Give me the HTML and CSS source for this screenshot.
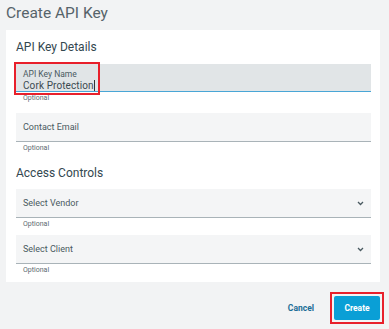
FILE: index.html
```html
<!DOCTYPE html>
<html lang="en">
<head>
    <meta charset="UTF-8">
    <title>Create API Key</title>
    <link rel="stylesheet" href="styles.css">
</head>
<body>
    <div class="page">
        <h1 class="title">Create API Key</h1>
        <div class="card">
            <h2 class="section">API Key Details</h2>
            <div class="field focused">
                <div class="mark">
                    <div class="label">API Key Name</div>
                    <div class="value">Cork Protection<span class="caret"></span></div>
                </div>
            </div>
            <div class="hint first">Optional</div>
            <div class="field">
                <div class="placeholder">Contact Email</div>
            </div>
            <div class="hint">Optional</div>
            <h2 class="section second">Access Controls</h2>
            <div class="field select">
                <div class="placeholder">Select Vendor</div>
                <svg class="chevron" width="7" height="5" viewBox="0 0 7 5"><path d="M1 1l2.5 2.5L6 1" fill="none" stroke="#4a5a61" stroke-width="1.3"/></svg>
            </div>
            <div class="hint">Optional</div>
            <div class="field select">
                <div class="placeholder">Select Client</div>
                <svg class="chevron" width="7" height="5" viewBox="0 0 7 5"><path d="M1 1l2.5 2.5L6 1" fill="none" stroke="#4a5a61" stroke-width="1.3"/></svg>
            </div>
            <div class="hint">Optional</div>
        </div>
        <div class="actions">
            <button class="btn-link">Cancel</button>
            <span class="highlight"><button class="btn-primary">Create</button></span>
        </div>
    </div>
</body>
</html>
```

FILE: styles.css
```css
* {
    margin: 0;
    padding: 0;
    box-sizing: border-box;
}
body {
    font-family: 'Roboto', 'Liberation Sans', sans-serif;
    background: #f2f3f4;
    color: #4a5a61;
}
.page {
    width: 389px;
    height: 329px;
    padding: 3px 9px 0 6px;
}
.title {
    font-size: 15.5px;
    font-weight: 400;
    color: #56636a;
    line-height: 20px;
    margin-bottom: 7px;
}
.card {
    background: #fff;
    padding: 9px 9px 12px 10px;
    height: 252px;
}
.section {
    font-size: 12px;
    font-weight: 400;
    color: #33474f;
    line-height: 16px;
    margin-bottom: 9px;
}
.section.second {
    margin-top: 12px;
    margin-bottom: 8px;
}
.field {
    position: relative;
    height: 29px;
    background: #f4f5f6;
    border-bottom: 1px solid #a9b3b8;
    padding: 0 7px;
    display: flex;
    align-items: center;
}
.field.focused {
    background: #e1e5e7;
    border-bottom-color: #49a6d6;
    height: 28px;
    padding: 0;
    align-items: flex-start;
}
.mark {
    outline: 2px solid #e8202b;
    padding: 5px 3px 0 7px;
    height: 29px;
}
.label {
    font-size: 8.5px;
    line-height: 10px;
    color: #4a5a61;
}
.value {
    font-size: 10px;
    line-height: 13px;
    color: #3b4a50;
    letter-spacing: 0.1px;
}
.caret {
    display: inline-block;
    width: 1px;
    height: 11px;
    background: #333;
    vertical-align: -2px;
}
.placeholder {
    font-size: 9px;
    color: #4a5a61;
}
.chevron {
    position: absolute;
    right: 7px;
    top: 12px;
}
.hint {
    font-size: 7px;
    line-height: 10px;
    color: #5b6a70;
    padding-left: 7px;
    margin-top: 1px;
    margin-bottom: 6px;
}
.hint.first {
    margin-bottom: 10px;
}
.actions {
    display: flex;
    justify-content: flex-end;
    align-items: center;
    gap: 16px;
    margin-top: 10px;
}
.btn-link {
    background: none;
    border: none;
    font-family: inherit;
    font-size: 8.5px;
    font-weight: 700;
    color: #1b6d96;
}
.highlight {
    display: block;
    border: 2px solid #e8202b;
    padding: 2px;
    margin-right: -4px;
}
.btn-primary {
    display: block;
    background: #0a9fd6;
    color: #fff;
    border: none;
    border-radius: 2px;
    font-family: inherit;
    font-size: 8.5px;
    font-weight: 700;
    width: 46px;
    height: 24px;
}
```
